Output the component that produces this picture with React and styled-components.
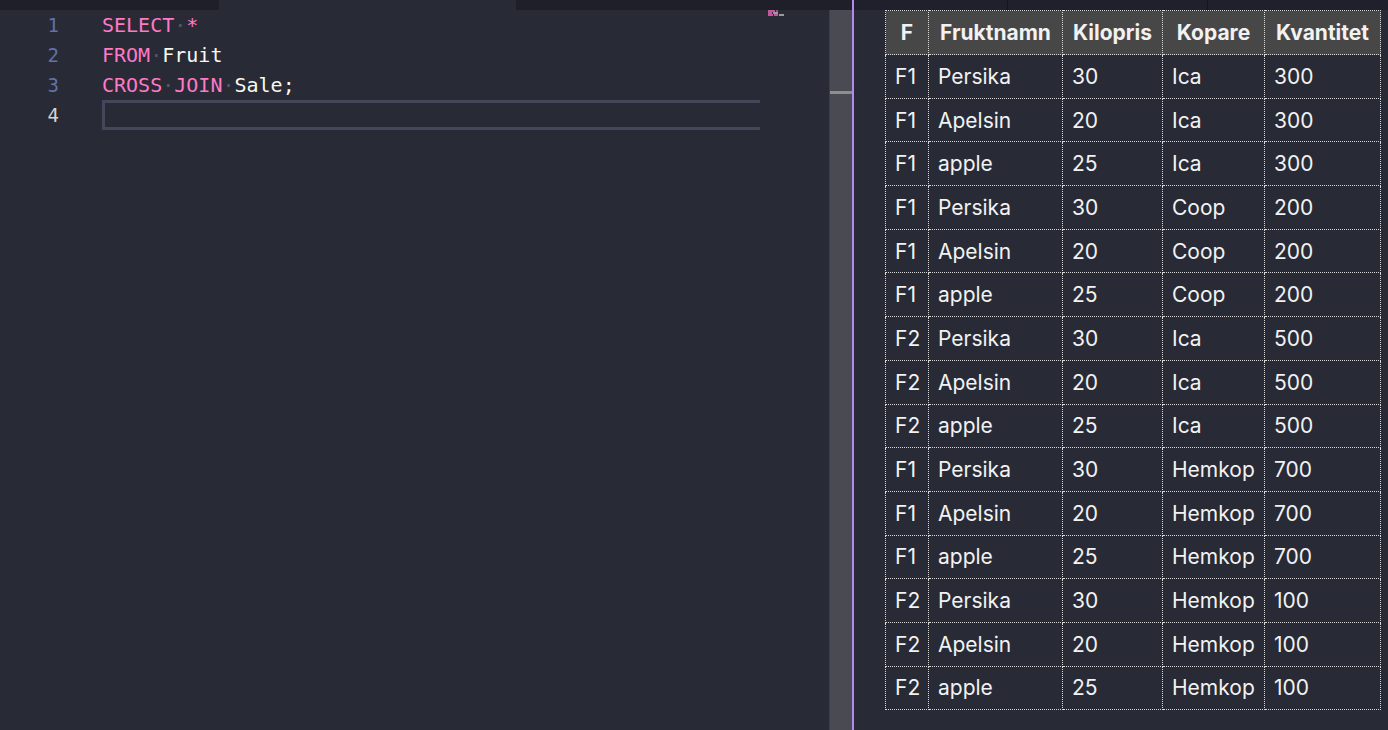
import React from "react";
import styled, { createGlobalStyle } from "styled-components";

const GlobalStyle = createGlobalStyle`
  html, body {
    margin: 0;
    padding: 0;
    background: #282a36;
  }
  * {
    box-sizing: border-box;
  }
`;

const Screen = styled.div`
  display: flex;
  width: 1388px;
  height: 730px;
  overflow: hidden;
  background: #282a36;
`;

const EditorPane = styled.div`
  width: 852px;
  display: flex;
  flex-direction: column;
`;

const TabBar = styled.div`
  height: 10px;
  display: flex;
  background: #1e1f28;
  flex-shrink: 0;
`;

const Tab = styled.div`
  width: ${(p) => p.w}px;
  background: ${(p) => (p.active ? "#282a36" : "#1e1f28")};
`;

const EditorBody = styled.div`
  flex: 1;
  display: flex;
`;

const Gutter = styled.div`
  width: 59px;
  text-align: right;
  font-family: "DejaVu Sans Mono", monospace;
  font-size: 19px;
`;

const LineNo = styled.div`
  height: 30px;
  line-height: 30px;
  color: ${(p) => (p.current ? "#d4d4d4" : "#6272a4")};
`;

const Code = styled.div`
  width: 701px;
  padding-left: 43px;
  font-family: "DejaVu Sans Mono", monospace;
  font-size: 20px;
`;

const CodeLine = styled.div`
  height: 30px;
  line-height: ${(p) => (p.current ? "24px" : "30px")};
  white-space: pre;
  color: #f8f8f2;
  border: ${(p) => (p.current ? "3px solid #44475a" : "none")};
  border-right: none;
`;

const Kw = styled.span`
  color: #ff79c6;
`;

const Ws = styled.span`
  color: #54576a;
`;

const Minimap = styled.div`
  width: 69px;
  padding: 0 0 0 8px;
`;

const MiniRow = styled.div`
  display: flex;
  gap: 1px;
  height: 2px;
`;

const MiniBit = styled.div`
  width: ${(p) => p.w}px;
  height: 2px;
  background: ${(p) => p.c};
`;

const Scrollbar = styled.div`
  width: 23px;
  background: #4a4a53;
  border-left: 1px solid #3d3e47;
  padding-top: 81px;
`;

const ScrollMark = styled.div`
  height: 3px;
  background: #8e8e8e;
`;

const Divider = styled.div`
  width: 2px;
  background: #b48af2;
`;

const ResultPane = styled.div`
  flex: 1;
  display: flex;
  flex-direction: column;
`;

const ResultTabs = styled.div`
  height: 10px;
  display: flex;
  background: #1f202b;
  flex-shrink: 0;
`;

const ResultTab = styled.div`
  width: ${(p) => p.w}px;
  border-right: 1px solid #14151c;
`;

const TableWrap = styled.div`
  padding-left: 31px;
`;

const Table = styled.table`
  border-collapse: collapse;
  table-layout: fixed;
  width: 495px;
  font-family: Inter, "Liberation Sans", sans-serif;
  font-size: 21px;
  color: #f2f2f2;
`;

const Th = styled.th`
  height: 44px;
  padding: 0 6px;
  background: #474747;
  border: 1px dotted #d8d8d8;
  font-weight: 700;
  text-align: center;
  white-space: nowrap;
`;

const Td = styled.td`
  height: 43.7px;
  padding: 0 9px;
  border: 1px dotted #d8d8d8;
  text-align: left;
  white-space: nowrap;
`;

const cols = [
  { name: "F", w: 43 },
  { name: "Fruktnamn", w: 134 },
  { name: "Kilopris", w: 100 },
  { name: "Kopare", w: 102 },
  { name: "Kvantitet", w: 116 },
];

const fruits = [
  ["Persika", "30"],
  ["Apelsin", "20"],
  ["apple", "25"],
];

const sales = [
  ["F1", "Ica", "300"],
  ["F1", "Coop", "200"],
  ["F2", "Ica", "500"],
  ["F1", "Hemkop", "700"],
  ["F2", "Hemkop", "100"],
];

const rows = sales.flatMap(([id, buyer, qty]) =>
  fruits.map(([name, price]) => [id, name, price, buyer, qty])
);

const lines = [
  [["kw", "SELECT"], ["ws"], ["kw", "*"]],
  [["kw", "FROM"], ["ws"], ["id", "Fruit"]],
  [["kw", "CROSS"], ["ws"], ["kw", "JOIN"], ["ws"], ["id", "Sale;"]],
  [],
];

const renderToken = ([type, text], i) => {
  if (type === "kw") return <Kw key={i}>{text}</Kw>;
  if (type === "ws") return <Ws key={i}>·</Ws>;
  return <span key={i}>{text}</span>;
};

const miniRows = [
  [["#c0589a", 7], ["#6a6b78", 2]],
  [["#c0589a", 4], ["#9a9aa0", 5]],
  [["#c0589a", 5], ["#c0589a", 4], ["#9a9aa0", 5]],
];

const App = () => {
  return (
    <>
      <GlobalStyle />
      <Screen>
        <EditorPane>
          <TabBar>
            <Tab w={219} />
            <Tab w={297} active />
            <Tab w={336} />
          </TabBar>
          <EditorBody>
            <Gutter>
              {lines.map((_, i) => (
                <LineNo key={i} current={i === 3}>
                  {i + 1}
                </LineNo>
              ))}
            </Gutter>
            <Code>
              {lines.map((tokens, i) => (
                <CodeLine key={i} current={i === 3}>
                  {tokens.map(renderToken)}
                </CodeLine>
              ))}
            </Code>
            <Minimap>
              {miniRows.map((bits, i) => (
                <MiniRow key={i}>
                  {bits.map(([c, w], j) => (
                    <MiniBit key={j} c={c} w={w} />
                  ))}
                </MiniRow>
              ))}
            </Minimap>
            <Scrollbar>
              <ScrollMark />
            </Scrollbar>
          </EditorBody>
        </EditorPane>
        <Divider />
        <ResultPane>
          <ResultTabs>
            <ResultTab w={154} />
            <ResultTab w={200} />
          </ResultTabs>
          <TableWrap>
            <Table>
              <colgroup>
                {cols.map((c) => (
                  <col key={c.name} style={{ width: c.w }} />
                ))}
              </colgroup>
              <thead>
                <tr>
                  {cols.map((c) => (
                    <Th key={c.name}>{c.name}</Th>
                  ))}
                </tr>
              </thead>
              <tbody>
                {rows.map((r, i) => (
                  <tr key={i}>
                    {r.map((v, j) => (
                      <Td key={j}>{v}</Td>
                    ))}
                  </tr>
                ))}
              </tbody>
            </Table>
          </TableWrap>
        </ResultPane>
      </Screen>
    </>
  );
};

export default App;
